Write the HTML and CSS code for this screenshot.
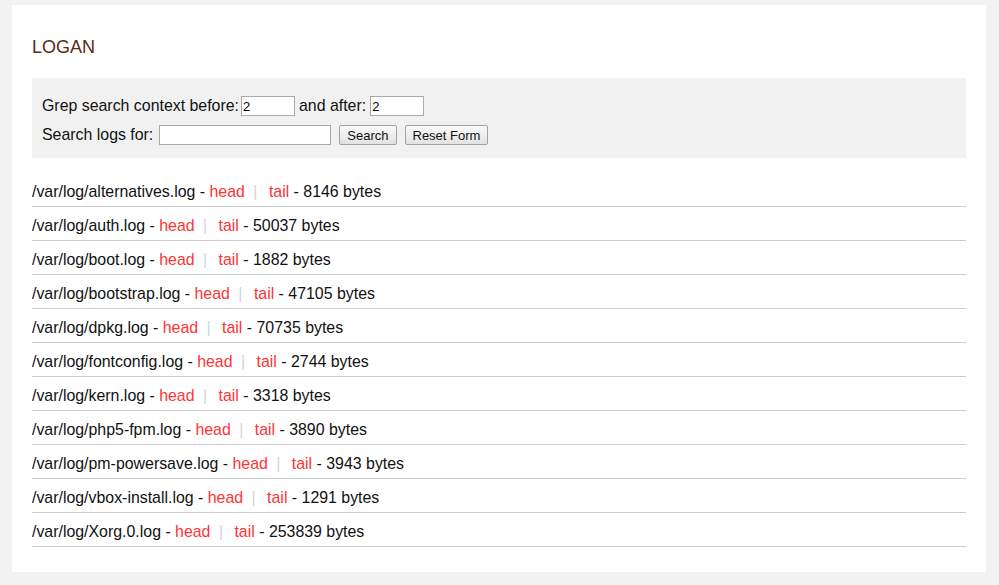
FILE: index.html
```html
<!DOCTYPE html>
<html>
<head>
<meta charset="utf-8">
<title>LOGAN</title>
<link rel="stylesheet" href="styles.css">
</head>
<body>
<div class="page">
  <h1 class="title">LOGAN</h1>
  <form class="search">
    <div class="row">
      <span>Grep search context before:</span>
      <input class="num" type="text" value="2">
      <span class="gap">and after:</span>
      <input class="num" type="text" value="2">
    </div>
    <div class="row row2">
      <span>Search logs for:</span>
      <input class="query" type="text">
      <button class="btn" type="button">Search</button>
      <button class="btn" type="button">Reset Form</button>
    </div>
  </form>
  <ul class="logs">
    <li>/var/log/alternatives.log - <a href="#">head</a> <span class="sep">|</span> <a href="#">tail</a> - 8146 bytes</li>
    <li>/var/log/auth.log - <a href="#">head</a> <span class="sep">|</span> <a href="#">tail</a> - 50037 bytes</li>
    <li>/var/log/boot.log - <a href="#">head</a> <span class="sep">|</span> <a href="#">tail</a> - 1882 bytes</li>
    <li>/var/log/bootstrap.log - <a href="#">head</a> <span class="sep">|</span> <a href="#">tail</a> - 47105 bytes</li>
    <li>/var/log/dpkg.log - <a href="#">head</a> <span class="sep">|</span> <a href="#">tail</a> - 70735 bytes</li>
    <li>/var/log/fontconfig.log - <a href="#">head</a> <span class="sep">|</span> <a href="#">tail</a> - 2744 bytes</li>
    <li>/var/log/kern.log - <a href="#">head</a> <span class="sep">|</span> <a href="#">tail</a> - 3318 bytes</li>
    <li>/var/log/php5-fpm.log - <a href="#">head</a> <span class="sep">|</span> <a href="#">tail</a> - 3890 bytes</li>
    <li>/var/log/pm-powersave.log - <a href="#">head</a> <span class="sep">|</span> <a href="#">tail</a> - 3943 bytes</li>
    <li>/var/log/vbox-install.log - <a href="#">head</a> <span class="sep">|</span> <a href="#">tail</a> - 1291 bytes</li>
    <li>/var/log/Xorg.0.log - <a href="#">head</a> <span class="sep">|</span> <a href="#">tail</a> - 253839 bytes</li>
  </ul>
</div>
</body>
</html>
```
FILE: styles.css
```css
html, body {
  margin: 0;
  padding: 0;
  background: #f2f2f2;
  font-family: "Liberation Sans", Arial, sans-serif;
  font-size: 15.9px;
  color: #111;
}
body {
  padding: 5px 13px 13px 12px;
}
.page {
  background: #fff;
  padding: 25px 20px 25px 20px;
  height: 517px;
}
.title {
  margin: 7px 0 20px 0;
  font-size: 18px;
  font-weight: normal;
  line-height: 21px;
  color: #5c2b14;
}
.search {
  background: #f1f1f1;
  padding: 16px 10px 11px 10px;
  margin: 0;
}
.row {
  display: flex;
  align-items: center;
  height: 24px;
  gap: 2px;
}
.row .gap {
  margin-left: 2px;
  margin-right: 2px;
}
.row2 {
  margin-top: 5px;
  gap: 8px;
}
.row2 span {
  margin-right: -2px;
}
input {
  font-family: "Liberation Sans", Arial, sans-serif;
  font-size: 13px;
  border: 1px solid #a9a9a9;
  background: #fff;
  box-sizing: border-box;
  height: 20px;
  padding: 0 1px;
  margin: 0;
  color: #000;
}
.num {
  width: 54px;
}
.query {
  width: 172px;
}
.btn {
  font-family: "Liberation Sans", Arial, sans-serif;
  font-size: 13px;
  height: 20px;
  box-sizing: border-box;
  padding: 0 7px;
  margin: 0;
  border: 1px solid #a3a3a3;
  border-radius: 2px;
  background: linear-gradient(#fafafa, #e2e2e2);
  color: #111;
}
.logs {
  list-style: none;
  margin: 15px 0 0 0;
  padding: 0;
}
.logs li {
  padding: 10px 0 5px 0;
  line-height: 18px;
  border-bottom: 1px solid #cccccc;
}
.logs a {
  color: #ff3333;
  text-decoration: none;
}
.sep {
  color: #d4d4d4;
  margin: 0 7px 0 4px;
}
```
